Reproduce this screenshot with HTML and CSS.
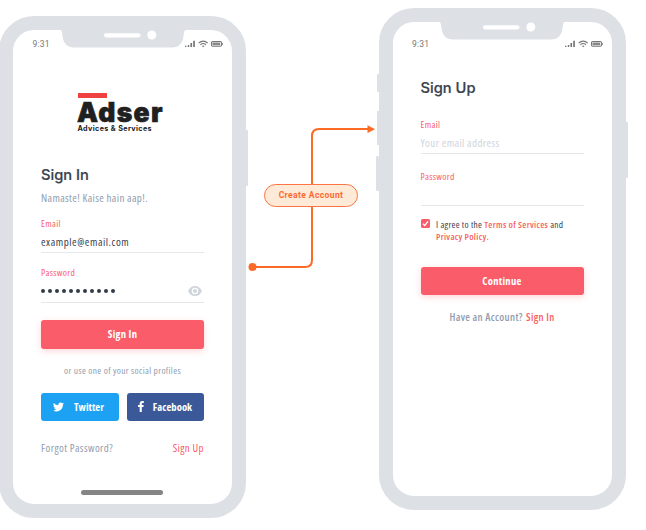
FILE: index.html
```html
<!DOCTYPE html>
<html lang="en">
<head>
<meta charset="utf-8">
<title>Adser sign in flow</title>
<link rel="stylesheet" href="styles.css">
</head>
<body>
<svg class="defs" width="0" height="0" aria-hidden="true">
  <symbol id="status" viewBox="0 0 38 8">
    <path fill="#777" d="M0 5.8h1.4V7H0zM2.8 4.9h1.4V7H2.8zM5.4 3h1.7v4H5.4zM8.2.8h1.7V7H8.2z"/>
    <g fill="none" stroke="#777" stroke-width="1.1"><path d="M13.7 3q4.5-3.7 9 0M15.4 4.7q2.8-2.3 5.6 0"/><rect x="26.5" y="1.5" width="10" height="4.8" rx="1.2"/></g>
    <path fill="#777" d="M16.9 5.9q1.3-.9 2.6 0l-1.3 1.4z"/><path fill="#888" d="M27.5 2.6h7.6v2.7h-7.6zM37 3h.8v2H37z"/>
  </symbol>
  <symbol id="notch" viewBox="0 0 128 18">
    <path fill="#dde1e6" d="M0 0C3 0 3 2 3.3 5C4 13 8 17.5 15 17.5H113C120 17.5 124 13 124.700 5C125 2 125 0 128 0Z"/>
    <rect x="45" y="3.200" width="36.500" height="4.300" rx="2.150" fill="#fff"/><circle cx="92.800" cy="5" r="4.500" fill="#fff"/>
  </symbol>
</svg>
<main class="board">
  <section class="phone phone-in">
    <i class="key key-power"></i>
    <svg class="notch"><use href="#notch"/></svg>
    <header class="status"><span>9:31</span><svg width="38" height="8"><use href="#status"/></svg></header>
    <div class="logo"><i class="logo-bar"></i><b class="brand">Adser</b><span class="tagline">Advices &amp; Services</span></div>
    <h1 class="title">Sign In</h1>
    <p class="hello">Namaste! Kaise hain aap!.</p>
    <label class="label">Email</label>
    <div class="value example">example@email.com</div>
    <label class="label label-pass">Password</label>
    <div class="value secret">
      <span class="dots"><i></i><i></i><i></i><i></i><i></i><i></i><i></i><i></i><i></i><i></i><i></i></span>
      <svg width="14" height="10" viewBox="0 0 14 10"><path fill="#d0d5db" fill-rule="evenodd" d="M7 0C3.800 0 1.200 2 0 5c1.200 3 3.800 5 7 5s5.800-2 7-5c-1.200-3-3.800-5-7-5zm0 8.300a3.300 3.300 0 1 1 0-6.600 3.300 3.300 0 0 1 0 6.600zM7 3a2 2 0 1 0 0 4 2 2 0 0 0 0-4z"/></svg>
    </div>
    <button class="primary">Sign In</button>
    <p class="or">or use one of your social profiles</p>
    <div class="social">
      <button class="twitter"><svg width="11" height="10" viewBox="0 0 24 20"><path fill="#fff" d="M24 2.400a10 10 0 0 1-2.800.8A5 5 0 0 0 23.300.5a10 10 0 0 1-3.100 1.200A4.900 4.900 0 0 0 11.800 6.200 14 14 0 0 1 1.700 1a4.900 4.900 0 0 0 1.500 6.600A5 5 0 0 1 1 7a4.900 4.900 0 0 0 3.900 4.900 5 5 0 0 1-2.200.1 4.900 4.900 0 0 0 4.600 3.400A9.900 9.900 0 0 1 0 17.500 14 14 0 0 0 21.500 5z"/></svg><span>Twitter</span></button>
      <button class="facebook"><svg width="6" height="11" viewBox="0 0 6 11"><path fill="#fff" d="M1.700 11V6H0V4h1.700V2.600C1.700.9 2.700 0 4.200 0L5.800.1v1.800h-1c-.8 0-1 .4-1 1V4h1.900l-.3 2H3.800v5z"/></svg><span>Facebook</span></button>
    </div>
    <div class="links"><span>Forgot Password?</span><a>Sign Up</a></div>
    <i class="home"></i>
  </section>

  <svg class="flow" width="124" height="150" viewBox="0 0 124 150">
    <path fill="none" stroke="#fd6a26" stroke-width="2" d="M5 143H57Q64 143 64 136V12Q64 5 71 5H120"/>
    <circle cx="4.500" cy="143" r="4" fill="#fd6a26"/><path fill="#fd6a26" d="M119.500 1.300L127 5.200L119.500 9z"/>
  </svg>
  <div class="pill">Create Account</div>

  <section class="phone phone-up">
    <i class="key key-power"></i><i class="key key-mute"></i><i class="key key-vol"></i><i class="key key-vol2"></i>
    <svg class="notch"><use href="#notch"/></svg>
    <header class="status"><span>9:31</span><svg width="38" height="8"><use href="#status"/></svg></header>
    <h1 class="title">Sign Up</h1>
    <label class="label">Email</label>
    <div class="value hint">Your email address</div>
    <label class="label label-pass">Password</label>
    <div class="value empty"></div>
    <div class="agree">
      <svg width="9" height="9" viewBox="0 0 9 9"><rect width="9" height="9" rx="1.500" fill="#fa5c69"/><path d="M2 4.700l1.800 1.700 3.200-4" fill="none" stroke="#fff" stroke-width="1.400"/></svg>
      <p>I agree to the <a>Terms of Services</a> and<br><a>Privacy Policy.</a></p>
    </div>
    <button class="primary">Continue</button>
    <p class="have">Have an Account? <a>Sign In</a></p>
  </section>
</main>
</body>
</html>
```
FILE: styles.css
```css
* { box-sizing: border-box; margin: 0; padding: 0; }
body { background: #fff; width: 646px; height: 530px; overflow: hidden; font-family: "Open Sans", sans-serif; font-stretch: 75%; font-size: 10px; color: #3a424d; }
.defs { position: absolute; }
.board { position: relative; width: 646px; height: 530px; display: flex; justify-content: space-between; padding: 8px 20.5px 0 0; }
.phone { position: relative; width: 247px; height: 501.5px; border: 14px solid #dde1e6; border-radius: 35px; padding: 0 28px; display: flex; flex-direction: column; }
.phone-in { margin: 8px 0 0 -1px; }
.notch { position: absolute; left: 45.500px; top: -.500px; width: 128px; height: 18px; }
.key { position: absolute; background: #dde1e6; width: 3px; border-radius: 1px; }
.key-power { right: -16px; top: 100px; height: 56px; }
.key-mute { left: -16px; top: 52px; height: 18px; }
.key-vol { left: -16px; top: 89px; height: 34px; }
.key-vol2 { left: -16.500px; top: 134px; height: 35px; }

.status { display: flex; justify-content: space-between; align-items: center; height: 10px; margin: 8.5px -19px 0 -8.5px; font: 8.5px Roboto, sans-serif; letter-spacing: .2px; color: #777; }
.phone-up .status { margin-top: 17px; }
.logo { display: flex; flex-direction: column; align-items: flex-start; height: 44px; margin: 44px 0 0 36.5px; color: #202020; white-space: nowrap; }
.logo-bar { width: 29.500px; height: 5px; background: #ee4140; }
.brand { font: 900 26.500px/22px Inter, sans-serif; letter-spacing: 1.3px; margin: 3.500px 0 0 -.5px; -webkit-text-stroke: .6px #202020; }
.tagline { font: 700 7.200px/8px Inter, sans-serif; letter-spacing: .38px; margin-top: 1.500px; }
.title { font: 500 14.700px/18px Inter, sans-serif; height: 18px; margin-top: 29.500px; -webkit-text-stroke: .2px #3a424d; }
.hello { height: 14px; line-height: 14px; margin-top: 7px; color: #929cad; font-size: 11px; letter-spacing: .36px; white-space: nowrap; }
.label { height: 10px; line-height: 10px; font-size: 9.500px; letter-spacing: .35px; color: #fa5c69; margin-top: 14px; }
.value { height: 24px; line-height: 15px; padding-top: 5px; border-bottom: 1px solid #e5e7eb; font-size: 11px; letter-spacing: .38px; }
.example { letter-spacing: .55px; }
.label-pass { margin-top: 15px; }
.secret { display: flex; justify-content: space-between; align-items: center; padding: 1px 2px 0 0; height: 25px; }
.dots { display: flex; gap: 3px; }
.dots i { width: 4px; height: 4px; border-radius: 50%; background: #343c48; }
button { border: 0; border-radius: 3px; color: #fff; font: 700 10.600px/14px "Open Sans", sans-serif; font-stretch: 75%; letter-spacing: .3px; }
.primary { flex: none; height: 28.500px; margin-top: 17px; background: #fa5c69; box-shadow: 0 2px 6px #fa5c6940; }
.or { text-align: center; height: 12px; line-height: 12px; margin-top: 16.500px; font-size: 9.400px; letter-spacing: .36px; color: #929cad; white-space: nowrap; }
.social { display: flex; gap: 8px; height: 28px; margin-top: 15.500px; }
.social button { flex: 1; display: flex; align-items: center; letter-spacing: .05px; }
.twitter { background: #1da1f2; padding-left: 12px; gap: 10px; }
.facebook { background: #3b5998; padding-left: 11.500px; gap: 8.500px; }
.links { display: flex; justify-content: space-between; height: 14px; line-height: 14px; margin-top: 20px; color: #929cad; font-size: 10.900px; letter-spacing: .41px; }
.links a { color: #fa5c69; }
.home { width: 82px; height: 4.500px; border-radius: 3px; background: #858585; margin: 35.500px 0 0 40px; }

.flow { position: absolute; left: 248px; top: 124px; overflow: visible; }
.pill { position: absolute; left: 264px; top: 184px; width: 94px; height: 23px; border: 1.500px solid #fc7543; border-radius: 12px; background: #ffead8; color: #fb6831; font: 700 8.500px/20px Roboto, sans-serif; letter-spacing: .4px; text-align: center; }

.phone-up .label { margin-top: 23.500px; }
.phone-up .label-pass { margin-top: 17.500px; }
.hint { color: #cfd4dc; }
.empty { height: 24px; }
.agree { display: flex; gap: 6.500px; margin-top: 13.500px; height: 24px; font-size: 9.400px; letter-spacing: .28px; line-height: 12px; white-space: nowrap; }
.agree svg { flex: none; }
.agree a { color: #f65f5d; font-weight: 600; }
.phone-up .primary { margin-top: 23.500px; }
.have { margin-top: 15px; height: 14px; line-height: 14px; text-align: center; color: #929cad; font-size: 10.600px; font-weight: 600; letter-spacing: .36px; white-space: nowrap; }
.have a { color: #fa5c5c; margin-left: 1px; }
```
